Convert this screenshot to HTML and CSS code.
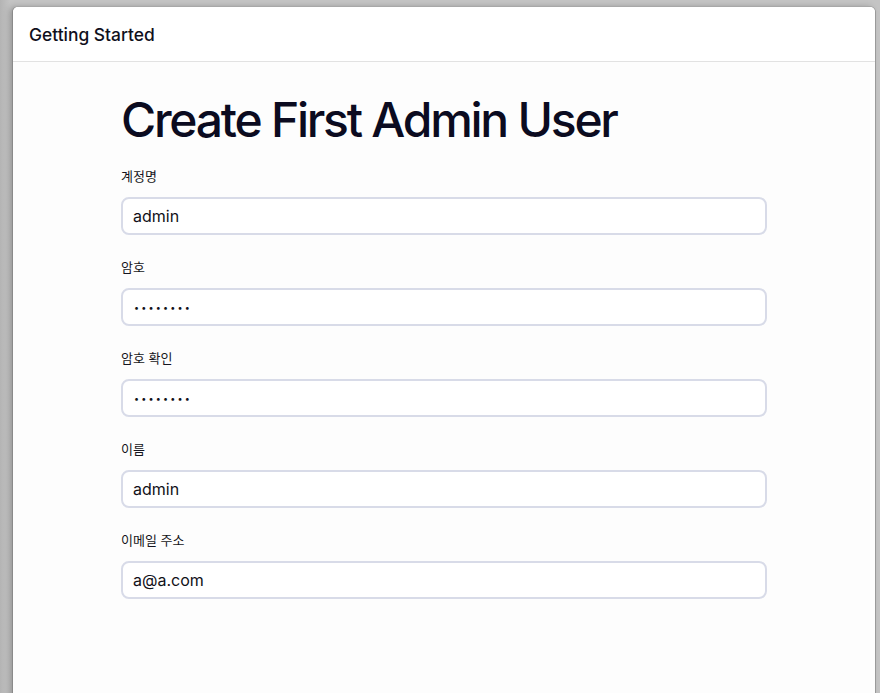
FILE: index.html
```html
<!DOCTYPE html>
<html lang="ko">
<head>
<meta charset="utf-8">
<title>Getting Started</title>
<link rel="stylesheet" href="styles.css">
</head>
<body>
<div class="window">
  <header class="window-header">Getting Started</header>
  <main class="content">
    <h1 class="title">Create First Admin User</h1>
    <form class="form">
      <div class="field">
        <label class="label">계정명</label>
        <input class="input" type="text" value="admin">
      </div>
      <div class="field">
        <label class="label">암호</label>
        <input class="input input-secret" type="password" value="password">
      </div>
      <div class="field">
        <label class="label">암호 확인</label>
        <input class="input input-secret" type="password" value="password">
      </div>
      <div class="field">
        <label class="label">이름</label>
        <input class="input" type="text" value="admin">
      </div>
      <div class="field">
        <label class="label">이메일 주소</label>
        <input class="input" type="text" value="a@a.com">
      </div>
    </form>
  </main>
</div>
</body>
</html>
```
FILE: styles.css
```css
html, body {
  margin: 0;
  padding: 0;
  height: 100%;
  overflow: hidden;
}
body {
  background: linear-gradient(90deg, #b4b4b4 0px, #c4c4c4 10px, #c4c4c4 100%);
  font-family: Inter, "Noto Sans CJK KR", sans-serif;
  color: #0d0d1c;
  padding: 7px 5px 0 13px;
  box-sizing: border-box;
}
.window {
  background: #fdfdfd;
  border-radius: 5px 5px 0 0;
  height: 720px;
  box-shadow: -1px 0 0 #8a8a8a, 1px 0 0 #9a9a9a, 0 -1px 0 #a8a8a8, -3px 0 6px rgba(0,0,0,0.25);
  overflow: hidden;
}
.window-header {
  height: 55px;
  box-sizing: border-box;
  background: #ffffff;
  border-bottom: 1px solid #e2e2e2;
  padding-left: 16px;
  padding-top: 1px;
  display: flex;
  align-items: center;
  font-size: 17.4px;
  font-weight: 500;
  color: #10101c;
}
.content {
  padding: 27px 108px 0 108px;
}
.title {
  margin: 0 0 17px 0;
  font-size: 48px;
  line-height: 62px;
  font-weight: 500;
  letter-spacing: -2.25px;
  color: #0b0b20;
}
.form {
  display: flex;
  flex-direction: column;
  gap: 24px;
}
.field {
  display: flex;
  flex-direction: column;
}
.label {
  font-size: 13px;
  line-height: 16px;
  margin-bottom: 13px;
  color: #151520;
}
.input {
  height: 38px;
  box-sizing: border-box;
  border: 2px solid #d8dbe8;
  border-radius: 8px;
  padding: 0 10px;
  font-family: Inter, "Noto Sans CJK KR", sans-serif;
  font-size: 16px;
  color: #111118;
  background: #ffffff;
  outline: none;
}
.input-secret {
  font-size: 9px;
  letter-spacing: 2.2px;
  padding-left: 11px;
}
```
